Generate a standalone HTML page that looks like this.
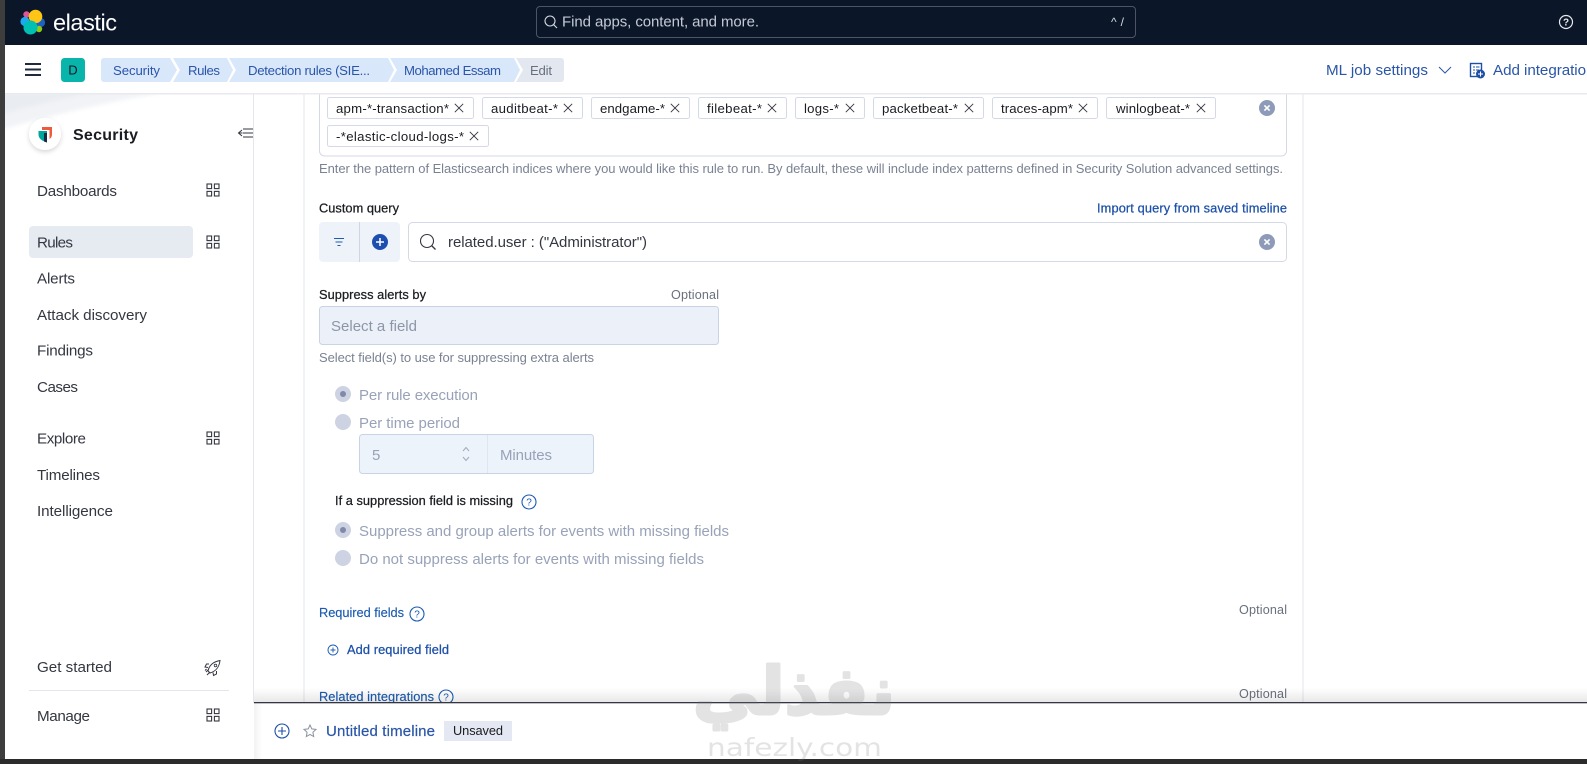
<!DOCTYPE html>
<html lang="en">
<head>
<meta charset="utf-8">
<title>Elastic Security - Edit rule</title>
<style>
html,body{margin:0;padding:0;background:#fff;width:1587px;height:764px;overflow:hidden}
svg{display:block}
text{font-family:"Liberation Sans",sans-serif;white-space:pre}
.nav{font-size:15.2px;fill:#343741}
.tag{font-size:13.2px;fill:#1a1c21}
.tb{fill:#fff;stroke:#d3dae6}
.x{stroke:#343741;stroke-width:.9;fill:none}
.grid{fill:none;stroke:#343741;stroke-width:1.1}
.hlp{font-size:13px;fill:#7a8292}
.dis{font-size:15px;fill:#98a2b8}
.lab{font-size:12.8px;fill:#1a1c21;stroke:#1a1c21;stroke-width:.25}
.lnk{font-size:12.8px;fill:#1c5bb0;stroke:#1c5bb0;stroke-width:.15}
.lnk2{font-size:12.8px;fill:#1d50a8;stroke:#1d50a8;stroke-width:.25}
.opt{font-size:12.6px;fill:#69707d}
.crumb{font-size:13.2px;fill:#2a56a8}
</style>
</head>
<body>
<svg xmlns="http://www.w3.org/2000/svg" width="1587" height="764" viewBox="0 0 1587 764">
<defs>
<g id="grid" class="grid"><rect x="-6" y="-6" width="4.6" height="4.6"/><rect x="1.4" y="-6" width="4.6" height="4.6"/><rect x="-6" y="1.4" width="4.6" height="4.6"/><rect x="1.4" y="1.4" width="4.6" height="4.6"/></g>
<g id="x" class="x"><path d="M-4.2-4.2 4.2 4.2M4.2-4.2-4.2 4.2"/></g>
<g id="clear"><circle r="8" fill="#8d9bb8"/><path d="M-2.6-2.6 2.6 2.6M2.6-2.6-2.6 2.6" stroke="#fff" stroke-width="1.6" fill="none"/></g>
<g id="q"><circle r="7" fill="#fff" stroke="#1c5bb0" stroke-width="1.1"/><text x="0" y="3.6" text-anchor="middle" style="font-size:10px;fill:#1c5bb0">?</text></g>
<linearGradient id="sh" x1="0" y1="0" x2="0" y2="1"><stop offset="0" stop-color="#000" stop-opacity="0"/><stop offset="1" stop-color="#000" stop-opacity=".09"/></linearGradient>
<linearGradient id="sh2" x1="0" y1="0" x2="1" y2="0"><stop offset="0" stop-color="#000" stop-opacity=".05"/><stop offset="1" stop-color="#000" stop-opacity="0"/></linearGradient>
<filter id="b" x="-50%" y="-50%" width="200%" height="200%"><feDropShadow dx="0" dy="2" stdDeviation="2.5" flood-color="#000" flood-opacity=".16"/></filter>
<filter id="blur" x="-20%" y="-50%" width="140%" height="200%"><feGaussianBlur stdDeviation="2"/></filter>
<clipPath id="side"><rect x="5" y="94" width="248" height="60"/></clipPath>
</defs>

<rect width="1587" height="764" fill="#fff"/>

<!-- sidebar swoosh -->
<g clip-path="url(#side)"><g filter="url(#blur)">
<path d="M0 90H175C120 100 60 112 0 130Z" fill="#f1f3f6"/>
<path d="M0 90H100C65 98 30 106 0 114Z" fill="#e9ecf1"/>
</g></g>
<rect x="253" y="94" width="1" height="609" fill="#e3e6ec"/>
<rect x="303.5" y="94" width="1" height="609" fill="#e3e6ec"/>
<rect x="1302.5" y="94" width="1" height="609" fill="#e3e6ec"/>

<!-- index patterns combo -->
<rect x="319.5" y="80" width="967" height="76" rx="5" fill="#fff" stroke="#d3dae6"/>

<!-- top header -->
<rect x="0" y="0" width="1587" height="45" fill="#0b1628"/>
<circle cx="26.5" cy="14.5" r="3.2" fill="#e0559a"/>
<circle cx="25" cy="21.5" r="4.6" fill="#1ba9f5"/>
<circle cx="40.5" cy="22.5" r="4.6" fill="#1a62c4"/>
<circle cx="39" cy="29" r="3.2" fill="#93c90e"/>
<circle cx="35.5" cy="16.5" r="6.8" fill="#fec514"/>
<circle cx="30.5" cy="27.5" r="7" fill="#00bfb3"/>
<text x="53" y="30.5" textLength="64" style="font-size:23.5px;fill:#fff">elastic</text>

<rect x="536.5" y="6.5" width="599" height="31" rx="3.5" fill="#0b1628" stroke="#4b5566"/>
<circle cx="550" cy="21" r="5" fill="none" stroke="#d5dae2" stroke-width="1.1"/><path d="M553.6 24.6 557 28" stroke="#d5dae2" stroke-width="1.1"/>
<text x="562" y="26.5" textLength="197" style="font-size:15px;fill:#c3cad5">Find apps, content, and more.</text>
<text x="1111" y="26" textLength="13" style="font-size:12px;fill:#d5dae2">^/</text>
<circle cx="1566" cy="22" r="6.5" fill="none" stroke="#e6e9ee" stroke-width="1.2"/>
<text x="1566" y="25.7" text-anchor="middle" style="font-size:10px;fill:#e6e9ee;font-weight:bold">?</text>

<!-- subheader -->
<rect x="5" y="45" width="1582" height="48" fill="#fff"/>
<path d="M25 64h16M25 69.5h16M25 75h16" stroke="#1f2a3d" stroke-width="2" fill="none"/>
<rect x="61" y="58" width="24" height="24" rx="3.5" fill="#09b5aa"/>
<text x="73" y="74.5" text-anchor="middle" style="font-size:13px;fill:#0b1628">D</text>

<path d="M104 58H170L177 70 170 82H104a3 3 0 0 1-3-3V61a3 3 0 0 1 3-3Z" fill="#d9e7fb"/>
<path d="M173 58H227L233 70 227 82H173L180 70Z" fill="#d9e7fb"/>
<path d="M229 58H388L394 70 388 82H229L236 70Z" fill="#d9e7fb"/>
<path d="M390 58H514L520 70 514 82H390L397 70Z" fill="#d9e7fb"/>
<path d="M516 58H561a3 3 0 0 1 3 3V79a3 3 0 0 1-3 3H516L523 70Z" fill="#e3e8f0"/>
<text class="crumb" x="113" y="75" textLength="47">Security</text>
<text class="crumb" x="188" y="75" textLength="32">Rules</text>
<text class="crumb" x="248" y="75" textLength="122">Detection rules (SIE...</text>
<text class="crumb" x="404" y="75" textLength="97">Mohamed Essam</text>
<text x="530" y="75" textLength="22" style="font-size:13.2px;fill:#69707d">Edit</text>

<text x="1326" y="75" textLength="102" style="font-size:15.2px;fill:#2a56a8">ML job settings</text>
<path d="M1439 67l6 6 6-6" fill="none" stroke="#2a56a8" stroke-width="1"/>
<rect x="1470.5" y="63.5" width="11" height="13" fill="none" stroke="#1d4fa8" stroke-width="1.4"/>
<path d="M1473 67h2M1476 67h3.5M1473 70h2M1476 70h3M1473 73h2" stroke="#1d4fa8" stroke-width="1"/>
<circle cx="1480.5" cy="74" r="4.5" fill="#1d4fa8"/>
<path d="M1478 74h5M1480.5 71.5v5" stroke="#fff" stroke-width="1"/>
<text x="1493" y="75" textLength="109" style="font-size:15.2px;fill:#2a56a8">Add integrations</text>

<rect x="5" y="93" width="1582" height="1.5" fill="#e8eaee"/>

<!-- sidebar -->
<circle cx="45" cy="134" r="16" fill="#fff" filter="url(#b)"/>
<path d="M42 127h10v7.5c0 2-.8 3.5-2.5 4.5v-9H42Z" fill="#f0593e"/>
<path d="M38.5 131h8.5v11.5c-5-1.5-8.5-4-8.5-8Z" fill="#00a69b"/>
<path d="M44 133h3v9.500l-3-1Z" fill="#1a2a40"/>
<text x="73" y="140" textLength="65" style="font-size:16px;fill:#1a1c21;font-weight:bold">Security</text>
<path d="M243 133h10M243 129h10M243 137h10M242 130l-3.500 3 3.500 3M238.500 133h4" fill="none" stroke="#343741" stroke-width="1"/>

<rect x="29" y="226" width="164" height="32" rx="4" fill="#e6ebf2"/>
<text class="nav" x="37" y="196" textLength="80">Dashboards</text>
<text class="nav" x="37" y="247.5" textLength="36">Rules</text>
<text class="nav" x="37" y="283.5" textLength="38">Alerts</text>
<text class="nav" x="37" y="320" textLength="110">Attack discovery</text>
<text class="nav" x="37" y="355.5" textLength="56">Findings</text>
<text class="nav" x="37" y="392" textLength="41">Cases</text>
<text class="nav" x="37" y="443.5" textLength="49">Explore</text>
<text class="nav" x="37" y="480" textLength="63">Timelines</text>
<text class="nav" x="37" y="516" textLength="76">Intelligence</text>
<text class="nav" x="37" y="672" textLength="75">Get started</text>
<text class="nav" x="37" y="721" textLength="53">Manage</text>
<use href="#grid" x="213" y="190"/>
<use href="#grid" x="213" y="242"/>
<use href="#grid" x="213" y="438"/>
<use href="#grid" x="213" y="715"/>
<path d="M208 671c1-5 4-9 12-10.5-1 8-5 11-10 12.5ZM209 664h-2.500l-1.500 3 3 .5M216.500 671v3l-3 1.500-.5-3M208 670l-2 2M210 672l-3 3M206.500 669l-1.500 1.500" fill="none" stroke="#343741" stroke-width="1"/>
<circle cx="215.5" cy="665.5" r="1.3" fill="none" stroke="#343741" stroke-width=".8"/>
<rect x="29" y="690" width="200" height="1" fill="#e3e6ec"/>

<!-- tags -->
<rect class="tb" x="327.5" y="97.5" width="146" height="21" rx="2"/>
<text class="tag" x="336" y="113" textLength="113">apm-*-transaction*</text><use href="#x" x="459" y="108"/>
<rect class="tb" x="482.5" y="97.5" width="100" height="21" rx="2"/>
<text class="tag" x="491" y="113" textLength="67">auditbeat-*</text><use href="#x" x="568" y="108"/>
<rect class="tb" x="591.5" y="97.5" width="98" height="21" rx="2"/>
<text class="tag" x="600" y="113" textLength="65">endgame-*</text><use href="#x" x="675" y="108"/>
<rect class="tb" x="698.5" y="97.5" width="88" height="21" rx="2"/>
<text class="tag" x="707" y="113" textLength="55">filebeat-*</text><use href="#x" x="772" y="108"/>
<rect class="tb" x="795.5" y="97.5" width="69" height="21" rx="2"/>
<text class="tag" x="804" y="113" textLength="35">logs-*</text><use href="#x" x="850" y="108"/>
<rect class="tb" x="873.5" y="97.5" width="110" height="21" rx="2"/>
<text class="tag" x="882" y="113" textLength="76">packetbeat-*</text><use href="#x" x="969" y="108"/>
<rect class="tb" x="992.5" y="97.5" width="105" height="21" rx="2"/>
<text class="tag" x="1001" y="113" textLength="72">traces-apm*</text><use href="#x" x="1083" y="108"/>
<rect class="tb" x="1106.5" y="97.5" width="109" height="21" rx="2"/>
<text class="tag" x="1116" y="113" textLength="74">winlogbeat-*</text><use href="#x" x="1201" y="108"/>
<use href="#clear" x="1267" y="108"/>
<rect class="tb" x="327.5" y="125.5" width="161" height="21" rx="2"/>
<text class="tag" x="336" y="141" textLength="128">-*elastic-cloud-logs-*</text><use href="#x" x="474" y="136"/>

<text class="hlp" x="319" y="173" textLength="964">Enter the pattern of Elasticsearch indices where you would like this rule to run. By default, these will include index patterns defined in Security Solution advanced settings.</text>

<!-- custom query -->
<text class="lab" x="319" y="212.5" textLength="80">Custom query</text>
<text class="lnk2" x="1097" y="212.5" textLength="190">Import query from saved timeline</text>
<rect x="319" y="222" width="81" height="40" rx="4" fill="#eef3fa"/>
<rect x="359" y="222" width="1" height="40" fill="#cfd6e2"/>
<path d="M334 238.5h10M335.5 242h7M337.5 245.5h3" stroke="#1d5bb0" stroke-width="1" fill="none"/>
<circle cx="380" cy="242" r="8" fill="#1d4fb0"/><path d="M376 242h8M380 238v8" stroke="#fff" stroke-width="1.5"/>
<rect x="408.5" y="222.5" width="878" height="39" rx="4" fill="#fff" stroke="#d3dae6"/>
<circle cx="427" cy="241" r="6.5" fill="none" stroke="#343741" stroke-width="1.1"/><path d="M431.5 245.5l4 4" stroke="#343741" stroke-width="1.3"/>
<text x="448" y="247" textLength="199" style="font-size:15px;fill:#343741">related.user : ("Administrator")</text>
<use href="#clear" x="1267" y="242"/>

<!-- suppress -->
<text class="lab" x="319" y="299" textLength="107">Suppress alerts by</text>
<text class="opt" x="671" y="299" textLength="48">Optional</text>
<rect x="319.5" y="306.5" width="399" height="38" rx="3" fill="#ecf1f9" stroke="#c8d4e4"/>
<text x="331" y="331" textLength="86" style="font-size:15px;fill:#8d96a6">Select a field</text>
<text class="hlp" x="319" y="362" textLength="275">Select field(s) to use for suppressing extra alerts</text>

<circle cx="343" cy="394" r="8" fill="#cdd3e2"/><circle cx="343" cy="394" r="3" fill="#7f89a8"/>
<text class="dis" x="359" y="400" textLength="119">Per rule execution</text>
<circle cx="343" cy="422" r="8" fill="#cdd3e2"/>
<text class="dis" x="359" y="428" textLength="101">Per time period</text>
<rect x="359.5" y="434.5" width="234" height="39" rx="3" fill="#edf3fb" stroke="#c8d4e4"/>
<rect x="487" y="435" width="1" height="38" fill="#dfe6f0"/>
<text class="dis" x="372" y="460">5</text>
<path d="M463 451l3-3.500 3 3.500M463 457l3 3.500 3-3.500" fill="none" stroke="#a0a9ba" stroke-width="1"/>
<text class="dis" x="500" y="460" textLength="52">Minutes</text>

<text class="lab" x="335" y="505" textLength="178">If a suppression field is missing</text>
<use href="#q" x="529" y="502"/>
<circle cx="343" cy="530" r="8" fill="#cdd3e2"/><circle cx="343" cy="530" r="3" fill="#7f89a8"/>
<text class="dis" x="359" y="536" textLength="370">Suppress and group alerts for events with missing fields</text>
<circle cx="343" cy="558" r="8" fill="#cdd3e2"/>
<text class="dis" x="359" y="564" textLength="345">Do not suppress alerts for events with missing fields</text>

<text class="lnk" x="319" y="617" textLength="85">Required fields</text>
<use href="#q" x="417" y="614"/>
<text class="opt" x="1239" y="614" textLength="48">Optional</text>
<circle cx="333" cy="650" r="5" fill="none" stroke="#1d5bb0" stroke-width=".9"/><path d="M330.5 650h5M333 647.5v5" stroke="#1d5bb0" stroke-width=".9"/>
<text class="lnk2" x="347" y="654" textLength="102">Add required field</text>
<text class="lnk" x="319" y="701" textLength="115">Related integrations</text>
<use href="#q" x="446" y="697"/>
<text class="opt" x="1239" y="698" textLength="48">Optional</text>

<!-- timeline bar -->
<rect x="254" y="688" width="1333" height="14" fill="url(#sh)"/>
<rect x="254" y="703" width="1333" height="56" fill="#fff"/>
<rect x="254" y="702" width="1333" height="1.3" fill="#343741"/>
<rect x="254" y="703" width="8" height="56" fill="url(#sh2)"/>
<circle cx="282" cy="731" r="7" fill="none" stroke="#1d4fa8" stroke-width="1.1"/><path d="M278 731h8M282 727v8" stroke="#1d4fa8" stroke-width="1.1"/>
<path d="M310 725l1.800 3.900 4.200.5-3.100 2.900.8 4.200-3.700-2.100-3.700 2.100.8-4.200-3.100-2.900 4.200-.5Z" fill="none" stroke="#8a919e" stroke-width="1"/>
<text x="326" y="736" textLength="109" style="font-size:15px;fill:#2a56a8;stroke:#2a56a8;stroke-width:.2">Untitled timeline</text>
<rect x="444" y="721" width="68" height="20" fill="#e3e8f2"/>
<text x="453" y="735" textLength="50" style="font-size:12.8px;fill:#1a1c21">Unsaved</text>

<!-- window chrome -->
<rect x="0" y="0" width="5" height="764" fill="#3d3d3d"/>
<rect x="0" y="759" width="1587" height="5" fill="#2b2b2b"/>

<!-- watermark -->
<g opacity=".2">
<text x="794" y="714" text-anchor="middle" style="font-family:'DejaVu Sans',sans-serif;font-size:66px;font-weight:bold;fill:#7a7a7a;stroke:#7a7a7a;stroke-width:3;stroke-linejoin:round" direction="rtl">نفذلي</text>
<text x="707" y="756" textLength="175" lengthAdjust="spacingAndGlyphs" style="font-family:'DejaVu Sans',sans-serif;font-size:25px;fill:#7a7a7a">nafezly.com</text>
</g>
</svg>
</body>
</html>
